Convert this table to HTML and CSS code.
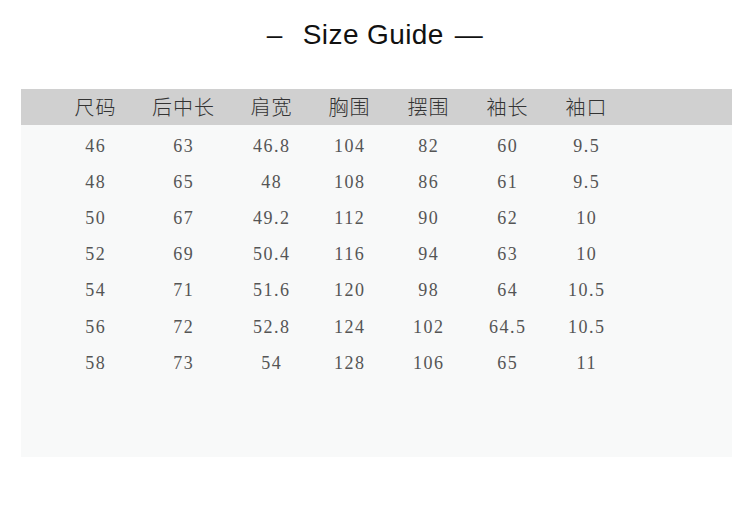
FILE: index.html
```html
<!DOCTYPE html>
<html lang="zh">
<head>
<meta charset="utf-8">
<title>Size Guide</title>
<link rel="stylesheet" href="styles.css">
</head>
<body>
<header class="title-bar">
  <h1 class="title"><span class="dash">–</span>Size Guide<span class="dash dash-right">—</span></h1>
</header>
<section class="chart">
  <div class="row head">
    <div class="cell">尺码</div><div class="cell">后中长</div><div class="cell">肩宽</div><div class="cell">胸围</div><div class="cell">摆围</div><div class="cell">袖长</div><div class="cell">袖口</div>
  </div>
  <div class="body">
    <div class="row"><div class="cell">46</div><div class="cell">63</div><div class="cell">46.8</div><div class="cell">104</div><div class="cell">82</div><div class="cell">60</div><div class="cell">9.5</div></div>
    <div class="row"><div class="cell">48</div><div class="cell">65</div><div class="cell">48</div><div class="cell">108</div><div class="cell">86</div><div class="cell">61</div><div class="cell">9.5</div></div>
    <div class="row"><div class="cell">50</div><div class="cell">67</div><div class="cell">49.2</div><div class="cell">112</div><div class="cell">90</div><div class="cell">62</div><div class="cell">10</div></div>
    <div class="row"><div class="cell">52</div><div class="cell">69</div><div class="cell">50.4</div><div class="cell">116</div><div class="cell">94</div><div class="cell">63</div><div class="cell">10</div></div>
    <div class="row"><div class="cell">54</div><div class="cell">71</div><div class="cell">51.6</div><div class="cell">120</div><div class="cell">98</div><div class="cell">64</div><div class="cell">10.5</div></div>
    <div class="row"><div class="cell">56</div><div class="cell">72</div><div class="cell">52.8</div><div class="cell">124</div><div class="cell">102</div><div class="cell">64.5</div><div class="cell">10.5</div></div>
    <div class="row"><div class="cell">58</div><div class="cell">73</div><div class="cell">54</div><div class="cell">128</div><div class="cell">106</div><div class="cell">65</div><div class="cell">11</div></div>
  </div>
</section>
</body>
</html>
```
FILE: styles.css
```css
html, body {
  margin: 0;
  padding: 0;
  background: #ffffff;
}

.title-bar {
  height: 89px;
  display: flex;
  justify-content: center;
  align-items: flex-start;
}

.title {
  margin: 18px 0 0 0;
  font-family: "Liberation Sans", Arial, sans-serif;
  font-weight: normal;
  font-size: 28px;
  line-height: 34px;
  color: #111111;
  letter-spacing: 0.4px;
}

.dash {
  margin-right: 20px;
}

.dash-right {
  margin-right: 0;
  margin-left: 11px;
}

.chart {
  margin-left: 21px;
  width: 711px;
}

.row {
  display: grid;
  grid-template-columns: 88px 88px 88px 68px 90px 68px 90px;
  padding-left: 30px;
}

.head {
  height: 36px;
  background: #d0d0d0;
  align-items: center;
}

.head .cell {
  font-family: "Noto Sans CJK SC", "Noto Sans", sans-serif;
  font-weight: 300;
  font-size: 20px;
  letter-spacing: 1px;
  padding-left: 1px;
  color: #333333;
  text-align: center;
  line-height: 36px;
}

.body {
  height: 332px;
  background: #f8f9f9;
  padding-top: 3px;
  box-sizing: border-box;
}

.body .row {
  height: 36.2px;
  align-items: center;
}

.body .cell {
  font-family: "Liberation Serif", "Times New Roman", serif;
  font-size: 18px;
  color: #555555;
  text-align: center;
  letter-spacing: 1.5px;
  padding-left: 1.5px;
}
```
